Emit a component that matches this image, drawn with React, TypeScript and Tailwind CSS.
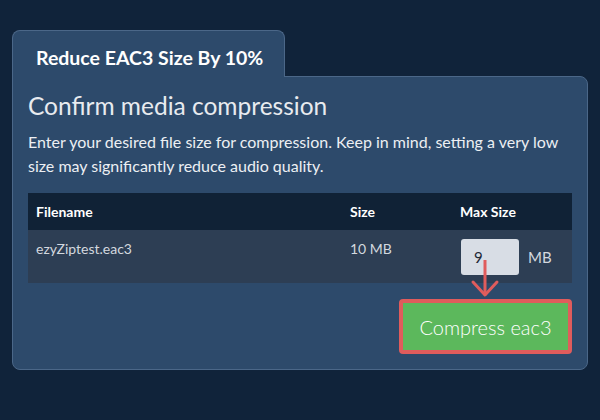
import React from "react";

export default function App() {
  return (
    <div
      className="w-[600px] h-[420px] bg-[#10233a] pt-[30px] px-[12px]"
      style={{ fontFamily: "Lato, 'Open Sans', sans-serif" }}
    >
      <div className="w-[576px]">
        <div className="relative z-10 -mb-px w-[273px] h-[47px] bg-[#2d4a6b] border border-b-0 border-[#4b6788] rounded-t-[8px] pl-[23px] flex items-center">
          <span className="text-[19.5px] font-bold text-white leading-none pt-[7px]">
            Reduce EAC3 Size By 10%
          </span>
        </div>
        <div className="relative bg-[#2d4a6b] border border-[#4b6788] rounded-tr-[8px] rounded-b-[8px] px-[15px] pt-[13px] pb-[15px]">
          <h1 className="text-[24.5px] leading-[32px] text-[#e8ebef]">Confirm media compression</h1>
          <p className="mt-2 text-[16px] leading-6 text-[#eceff3]">
            Enter your desired file size for compression. Keep in mind, setting a very low size may
            significantly reduce audio quality.
          </p>
          <div className="mt-[15px] text-[14px]">
            <div className="grid grid-cols-[314px_110px_1fr] bg-[#102236] h-[37px] items-center font-bold text-white">
              <div className="px-2">Filename</div>
              <div className="px-2">Size</div>
              <div className="px-2">Max Size</div>
            </div>
            <div className="grid grid-cols-[314px_110px_1fr] bg-[#2d3e54] h-[53px] text-[#d3d8df]">
              <div className="px-2 pt-[9px] leading-5">ezyZiptest.eac3</div>
              <div className="px-2 pt-[9px] leading-5">10 MB</div>
              <div className="px-2 pt-[9px] flex items-center gap-[9px] h-[45px]">
                <div className="relative w-[58px] h-9 ml-px bg-[#d8dde5] rounded-[3px] flex items-center pl-[13px] text-[15px] text-[#1f2937]">
                  9
                  <svg
                    className="absolute left-[12px] top-[21px] overflow-visible"
                    width="26"
                    height="40"
                    viewBox="0 0 26 40"
                  >
                    <line x1="12" y1="0" x2="12" y2="35" stroke="#e05c5c" strokeWidth="3" />
                    <polyline
                      points="0,22 12,35 24,22"
                      fill="none"
                      stroke="#e05c5c"
                      strokeWidth="3"
                      strokeLinecap="round"
                      strokeLinejoin="round"
                    />
                  </svg>
                </div>
                <span className="text-[#d3d8df] text-[15px]">MB</span>
              </div>
            </div>
          </div>
          <div className="flex justify-end mt-4">
            <button className="w-[173px] h-[55px] border-4 border-[#e05c5c] rounded-[4px] bg-[#5cb85c] text-white text-[20px] font-light">
              Compress eac3
            </button>
          </div>
        </div>
      </div>
    </div>
  );
}
